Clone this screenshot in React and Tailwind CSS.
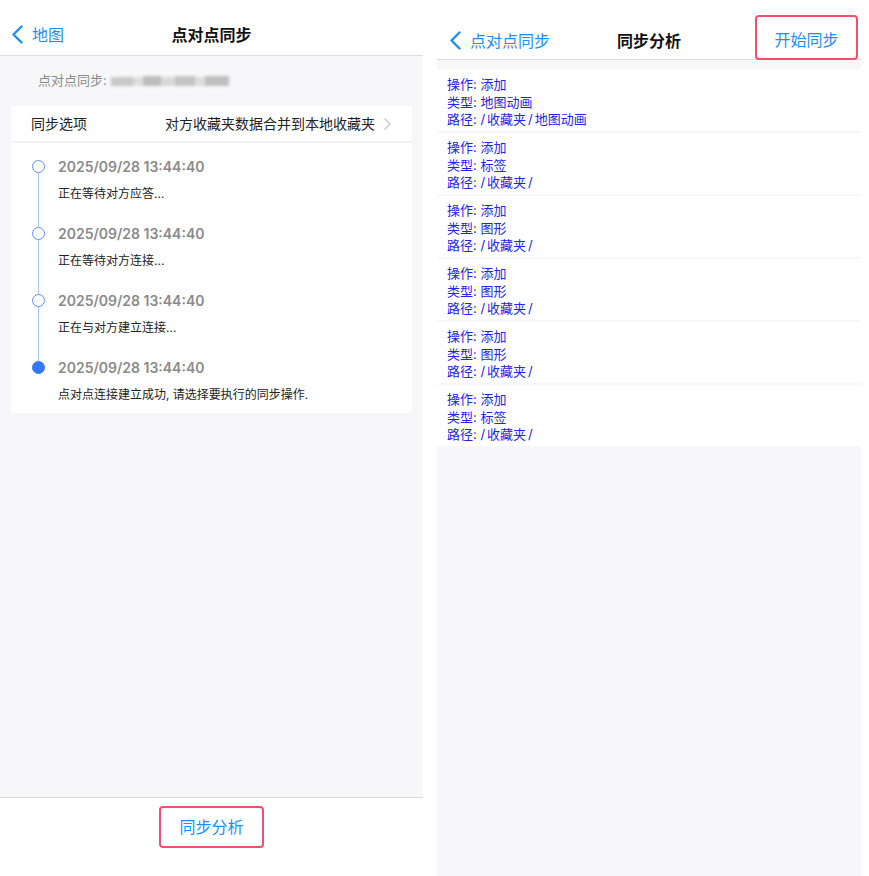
import React from 'react';

const FONT = { fontFamily: 'Inter, "Noto Sans CJK SC", "Noto Sans", sans-serif' };

const steps = [
  { time: '2025/09/28 13:44:40', text: '正在等待对方应答...' },
  { time: '2025/09/28 13:44:40', text: '正在等待对方连接...' },
  { time: '2025/09/28 13:44:40', text: '正在与对方建立连接...' },
  { time: '2025/09/28 13:44:40', text: '点对点连接建立成功, 请选择要执行的同步操作.', done: true },
];

const changes = [
  { type: '地图动画', path: ['收藏夹', '地图动画'] },
  { type: '标签', path: ['收藏夹', ''] },
  { type: '图形', path: ['收藏夹', ''] },
  { type: '图形', path: ['收藏夹', ''] },
  { type: '图形', path: ['收藏夹', ''] },
  { type: '标签', path: ['收藏夹', ''] },
];

function BackChevron() {
  return (
    <svg width="13" height="19" viewBox="0 0 13 19" fill="none">
      <path d="M10.5 1.5L2.5 9.5L10.5 17.5" stroke="#1e8ef3" strokeWidth="2.4" strokeLinecap="round" strokeLinejoin="round" />
    </svg>
  );
}

function LeftScreen() {
  return (
    <div className="w-[423px] h-full flex flex-col bg-white">
      {/* nav bar */}
      <div className="h-[56px] pt-[14px] border-b border-[#dcdcdc] grid grid-cols-[1fr_auto_1fr] items-center">
        <div className="flex items-center pl-[11px] gap-[8px] text-[16px] text-[#1e8ef3]">
          <BackChevron />
          <span>地图</span>
        </div>
        <div className="text-[16px] font-semibold text-[#111]">点对点同步</div>
        <div />
      </div>

      {/* body */}
      <div className="flex-1 bg-[#f7f7f9] px-[11px]">
        <div className="h-[50px] flex items-center pl-[27px] text-[13px] text-[#8a8a8a]">
          <span>点对点同步:</span>
          <div className="ml-[4px] flex items-center blur-[1.5px]">
            <span className="w-[22px] h-[9px] bg-[#c8c8c8]" />
            <span className="w-[10px] h-[9px] bg-[#dedede]" />
            <span className="w-[18px] h-[10px] bg-[#bdbdbd]" />
            <span className="w-[14px] h-[9px] bg-[#d8d8d8]" />
            <span className="w-[20px] h-[10px] bg-[#c4c4c4]" />
            <span className="w-[10px] h-[9px] bg-[#dcdcdc]" />
            <span className="w-[24px] h-[10px] bg-[#bfbfbf]" />
          </div>
        </div>

        <div className="bg-white">
          <div className="h-[37px] flex items-center justify-between pl-[20px] pr-[21px] text-[14px] text-[#222] border-b-2 border-[#f3f3f5]">
            <span>同步选项</span>
            <div className="flex items-center gap-[9px]">
              <span>对方收藏夹数据合并到本地收藏夹</span>
              <svg width="7" height="12" viewBox="0 0 7 12" fill="none">
                <path d="M1 1l5 5-5 5" stroke="#c4c4c6" strokeWidth="1.3" strokeLinecap="round" strokeLinejoin="round" />
              </svg>
            </div>
          </div>

          <div className="pt-[14px]">
            {steps.map((s, i) => {
              const first = i === 0;
              const last = i === steps.length - 1;
              return (
                <div key={i} className="flex">
                  <div className="w-[13px] ml-[21px] flex flex-col items-center">
                    <div className={first ? 'h-[3px] w-[1.5px]' : 'h-[3px] w-[1.5px] bg-[#a9c6ff]'} />
                    <div
                      className={
                        s.done
                          ? 'w-[13px] h-[13px] rounded-full bg-[#3478f6] border-[1.5px] border-[#3478f6] shrink-0'
                          : 'w-[13px] h-[13px] rounded-full bg-white border-[1.5px] border-[#5b8ff9] shrink-0'
                      }
                    />
                    {!last && <div className="flex-1 w-[1.5px] bg-[#a9c6ff]" />}
                  </div>
                  <div className={last ? 'ml-[13px] pb-[9px]' : 'ml-[13px] pb-[21px]'}>
                    <div className="text-[14px] leading-[20px] font-semibold text-[#8a8a8a]">{s.time}</div>
                    <div className="mt-[8px] text-[12px] leading-[18px] text-[#222]">{s.text}</div>
                  </div>
                </div>
              );
            })}
          </div>
        </div>
      </div>

      {/* footer */}
      <div className="h-[79px] border-t border-[#dcdcdc] flex justify-center">
        <div className="mt-[8px] w-[105px] h-[42px] border-2 border-[#f0506e] rounded-[4px] flex items-center justify-center text-[16px] text-[#1e8ef3]">
          同步分析
        </div>
      </div>
    </div>
  );
}

function RightScreen() {
  return (
    <div className="w-[424px] h-full flex flex-col bg-[#f7f7f9]">
      <div className="h-[60px] pt-[18px] bg-white border-b border-[#dcdcdc] grid grid-cols-[1fr_auto_1fr] items-center">
        <div className="flex items-center pl-[12px] gap-[8px] text-[16px] text-[#1e8ef3]">
          <BackChevron />
          <span>点对点同步</span>
        </div>
        <div className="text-[16px] font-semibold text-[#111]">同步分析</div>
        <div className="flex justify-end pr-[3px]">
          <div className="-translate-y-[3px] w-[103px] h-[45px] border-2 border-[#f0506e] rounded-[4px] flex items-center justify-center pt-[5px] text-[16px] text-[#1e8ef3]">
            开始同步
          </div>
        </div>
      </div>

      <div className="pt-[10px] flex flex-col gap-[2px]">
        {changes.map((c, i) => (
          <div key={i} className="bg-white pl-[10px] pt-[6px] pb-[2.5px] text-[13px] leading-[17.5px] text-[#2424e6]">
            <div>操作: 添加</div>
            <div>类型: {c.type}</div>
            <div>
              路径: <span className="mr-[2px]">/</span>
              {c.path[0]}
              <span className="mx-[2px]">/</span>
              {c.path[1]}
            </div>
          </div>
        ))}
      </div>
    </div>
  );
}

export default function App() {
  return (
    <div className="w-[869px] h-[876px] flex bg-white overflow-hidden" style={FONT}>
      <LeftScreen />
      <div className="w-[14px]" />
      <RightScreen />
    </div>
  );
}
